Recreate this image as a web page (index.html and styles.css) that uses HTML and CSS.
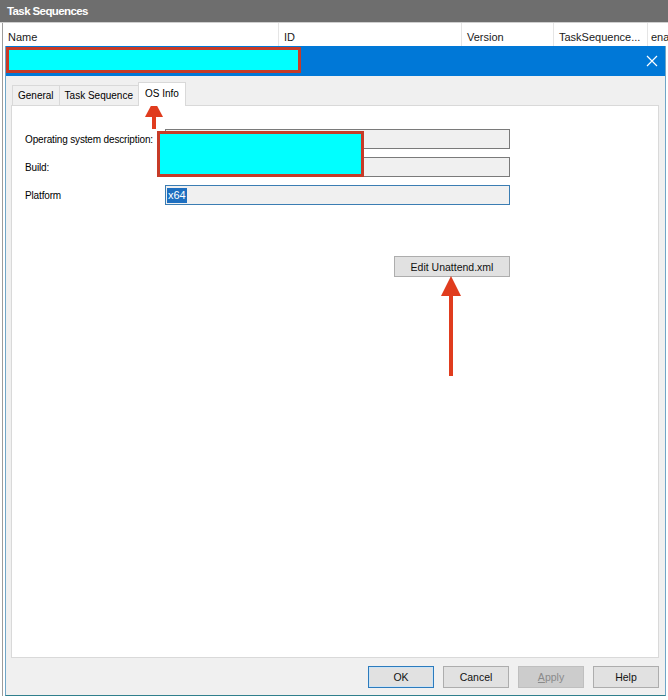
FILE: index.html
```html
<!DOCTYPE html>
<html>
<head>
<meta charset="utf-8">
<link rel="stylesheet" href="styles.css">
</head>
<body>
<div class="appbar">Task Sequences</div>
<div class="pane">
  <div class="listhead">
    <div class="col c1">Name</div>
    <div class="col c2">ID</div>
    <div class="col c3">Version</div>
    <div class="col c4">TaskSequence...</div>
    <div class="col c5">ena</div>
  </div>
  <div class="dialog">
    <div class="titlebar">
      <div class="redact-title"></div>
      <svg class="close" width="12" height="12" viewBox="0 0 12 12"><path d="M1 1 L11 11 M11 1 L1 11" stroke="#fff" stroke-width="1.2" fill="none"/></svg>
    </div>
    <div class="dbody">
      <div class="tabs">
        <div class="tab">General</div>
        <div class="tab">Task Sequence</div>
        <div class="tab active">OS Info</div>
      </div>
      <div class="panel">
        <div class="form">
          <div class="label">Operating system description:</div><div class="input"></div>
          <div class="label">Build:</div><div class="input"></div>
          <div class="label">Platform</div><div class="input focus"><span class="sel">x64</span></div>
        </div>
        <div class="actions"><div class="btn wide">Edit Unattend.xml</div></div>
      </div>
      <div class="buttons">
        <div class="btn default">OK</div>
        <div class="btn">Cancel</div>
        <div class="btn disabled"><u>A</u>pply</div>
        <div class="btn">Help</div>
      </div>
    </div>
  </div>
</div>
<div class="redact-field"></div>
<svg class="arrow arrow-tab" width="20" height="30" viewBox="0 0 20 30"><polygon points="10,0 1,17 19,17" fill="#e03c1e"/><rect x="8" y="16" width="4" height="13" fill="#e03c1e"/></svg>
<svg class="arrow arrow-btn" width="22" height="102" viewBox="0 0 22 102"><polygon points="11,1 1,21 21,21" fill="#e03c1e"/><rect x="9" y="20" width="4" height="81" fill="#e03c1e"/></svg>
</body>
</html>
```
FILE: styles.css
```css
* { box-sizing: border-box; }
html, body { margin: 0; padding: 0; }
body {
  width: 668px;
  height: 700px;
  overflow: hidden;
  position: relative;
  background: #fff;
  font-family: "Liberation Sans", Arial, sans-serif;
  font-size: 10px;
  color: #000;
}
.appbar {
  height: 23px;
  background: #6e6e6e;
  border-bottom: 1px solid #cfcfcf;
  color: #fff;
  font-weight: bold;
  font-size: 11.5px;
  letter-spacing: -0.6px;
  line-height: 22px;
  padding-left: 7px;
}
.pane {
  margin-left: 2px;
  border-left: 1px solid #9c9c9c;
}
.listhead {
  display: grid;
  grid-template-columns: 276px 183px 92px 94px 1fr;
  height: 23px;
  font-size: 11px;
  color: #1a1a1a;
}
.col {
  padding: 6px 0 0 5px;
  line-height: 17px;
  border-right: 1px solid #e5e5e5;
  white-space: nowrap;
  overflow: hidden;
}
.col.c5 { border-right: none; padding-left: 3px; }
.dialog {
  margin-left: 2px;
  width: 661px;
  border: 1px solid #6fa6c8;
  border-top: none;
  border-bottom-color: #2f7f8c;
  background: #f0f0f0;
}
.titlebar {
  height: 30px;
  background: #0078d7;
  display: flex;
  align-items: flex-start;
  justify-content: space-between;
  padding-right: 7px;
}
.redact-title {
  width: 295px;
  height: 26px;
  margin-top: 1px;
  background: #00ffff;
  border: 3px solid #c63b28;
}
.close { margin-top: 9px; }
.dbody {
  padding: 6px 6px 7px 5px;
}
.tabs {
  display: flex;
  height: 23px;
  align-items: flex-end;
  padding-left: 1px;
  position: relative;
  z-index: 1;
}
.tab {
  height: 20px;
  line-height: 19px;
  padding: 0 5px;
  border: 1px solid #d9d9d9;
  border-bottom: none;
  border-right: none;
  background: #f0f0f0;
  white-space: nowrap;
}
.tab.active {
  height: 24px;
  margin-bottom: -1px;
  background: #fff;
  border-right: 1px solid #d9d9d9;
  padding: 0 6px;
  line-height: 22px;
}
.panel {
  height: 553px;
  background: #fff;
  border: 1px solid #d9d9d9;
  padding: 23px 0 0 13px;
}
.form {
  width: 485px;
  display: grid;
  grid-template-columns: 140px 345px;
  grid-auto-rows: 20px;
  row-gap: 8px;
  align-items: center;
}
.label { white-space: nowrap; letter-spacing: -0.15px; }
.input {
  height: 20px;
  background: #f0f0f0;
  border: 1px solid #7a7a7a;
  padding: 2px 0 0 1px;
}
.input.focus { border-color: #3b7db3; }
.sel {
  display: inline-block;
  background: #1e6fc0;
  color: #fff;
  height: 15px;
  line-height: 15px;
  padding: 0 1px;
  font-size: 11px;
}
.actions {
  width: 485px;
  display: flex;
  justify-content: flex-end;
  margin-top: 51px;
}
.btn {
  width: 66px;
  height: 22px;
  background: #e1e1e1;
  border: 1px solid #adadad;
  display: flex;
  align-items: center;
  justify-content: center;
  font-size: 10.5px;
  color: #111;
}
.btn.wide { width: 116px; height: 21px; }
.btn.default { border: 1px solid #2c7bbd; box-shadow: inset 0 0 0 1px #cde3f4; }
.btn.disabled { background: #cccccc; border-color: #bfbfbf; color: #8a8a8a; }
.buttons {
  display: flex;
  justify-content: flex-end;
  gap: 9px;
  margin-top: 8px;
}
.redact-field {
  position: absolute;
  left: 157px;
  top: 131px;
  width: 207px;
  height: 46px;
  background: #00ffff;
  border: 3px solid #c63b28;
}
.arrow { position: absolute; }
.arrow-tab { left: 144px; top: 100px; }
.arrow-btn { left: 440px; top: 275px; }
```
